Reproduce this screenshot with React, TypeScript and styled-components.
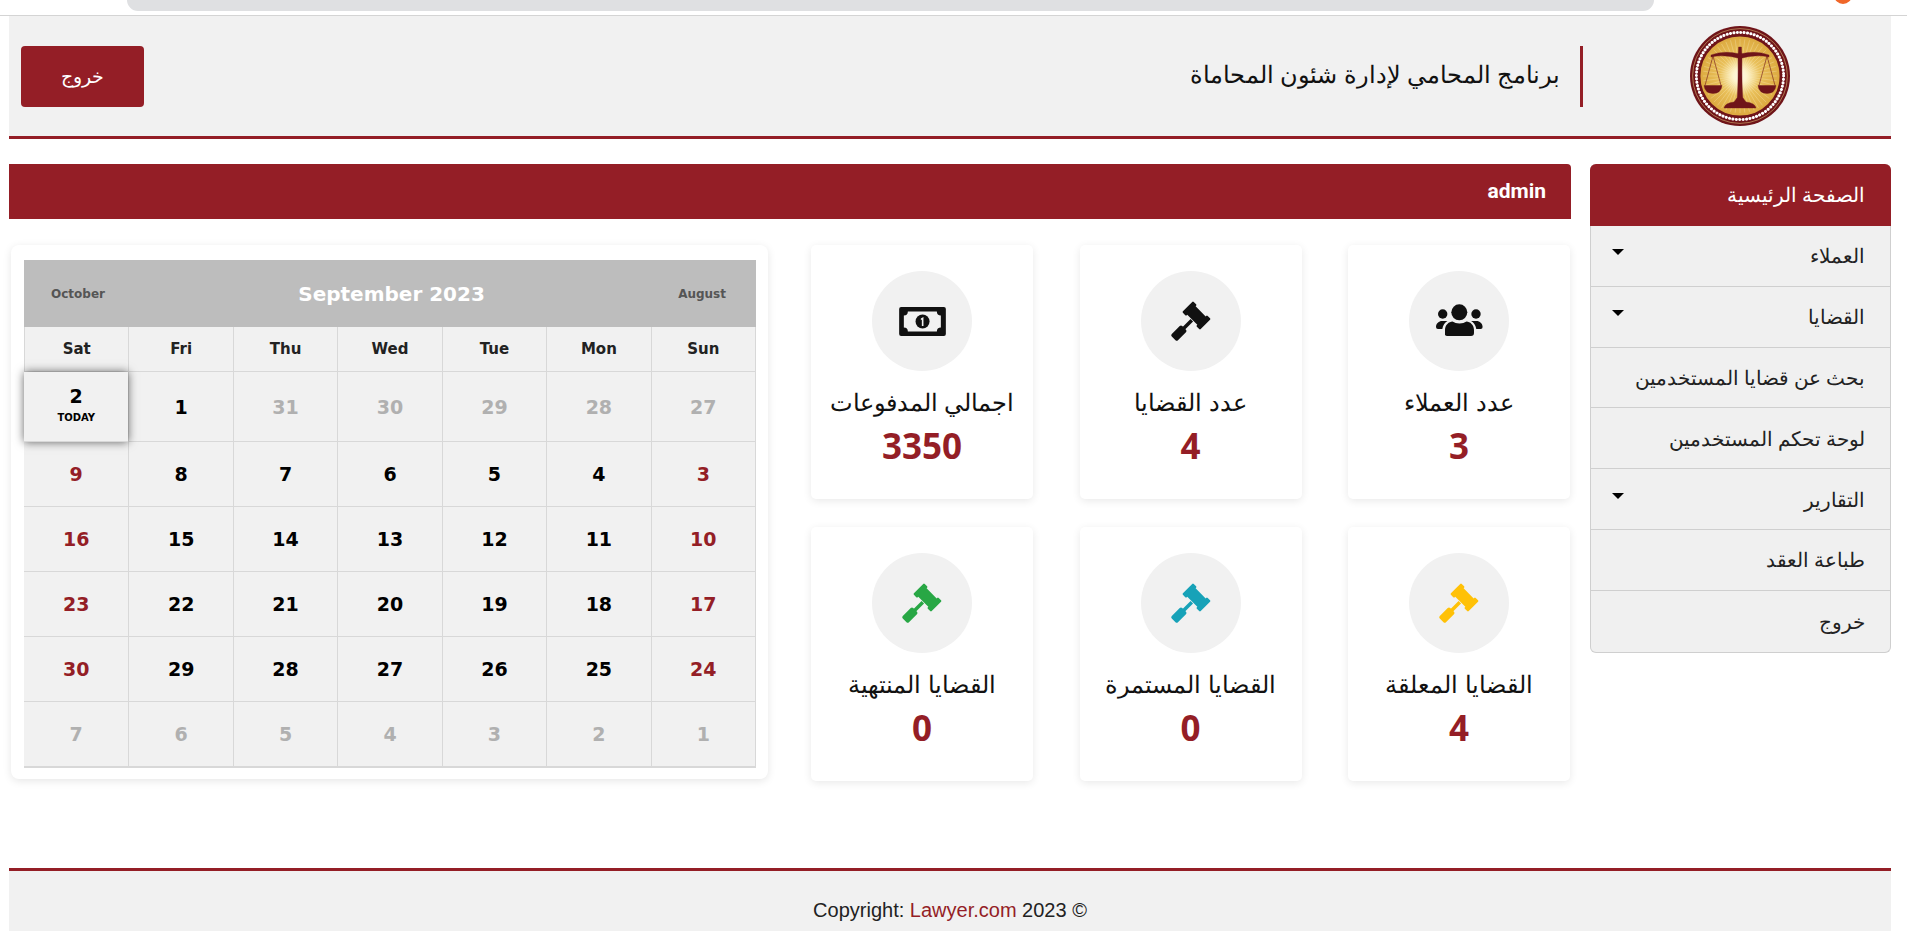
import React from "react";
import styled, { createGlobalStyle } from "styled-components";

const RED = "#941e26";

const GlobalStyle = createGlobalStyle`
  html, body {
    margin: 0;
    padding: 0;
    background: #ffffff;
    overflow: hidden;
  }
  * {
    box-sizing: border-box;
  }
  body {
    font-family: "Open Sans", "Noto Sans", sans-serif;
    color: #111;
  }
`;

const BrowserStrip = styled.div`
  height: 16px;
  border-bottom: 1px solid #d4d4d4;
  padding: 0 253px 0 127px;
  display: flex;
  direction: ltr;
  position: relative;
  overflow: hidden;
`;

const AddressPill = styled.div`
  flex: 1;
  height: 11px;
  background: #dfe0e2;
  border-radius: 0 0 14px 14px;
`;

const OrangeDot = styled.div`
  position: absolute;
  left: 1834px;
  top: -14px;
  width: 18px;
  height: 18px;
  border-radius: 50%;
  background: #f0672a;
`;

const Page = styled.div`
  direction: rtl;
  padding: 0 16px 0 9px;
`;

const Header = styled.header`
  height: 123px;
  background: #f1f1f1;
  border-bottom: 3px solid ${RED};
  display: flex;
  align-items: center;
  padding: 0 101px 0 12px;
`;

const Logo = styled.svg`
  width: 100px;
  height: 100px;
  flex: none;
`;

const BrandTitle = styled.h1`
  margin: 0 107px 0 0;
  height: 61px;
  flex: 1;
  display: flex;
  align-items: center;
  border-right: 3px solid ${RED};
  padding: 0 20px 5px 0;
  font-size: 23.8px;
  font-weight: 400;
  color: #111;
`;

const LogoutButton = styled.button`
  width: 123px;
  height: 61px;
  border: 0;
  border-radius: 4px;
  background: ${RED};
  color: #fff;
  font-family: inherit;
  font-size: 19px;
`;

const Body = styled.div`
  display: flex;
  gap: 19px;
  padding-top: 25px;
`;

const Sidebar = styled.nav`
  width: 301px;
  flex: none;
  align-self: flex-start;
  background: #f0f0f0;
  border: 1px solid #cfcfcf;
  border-top: 0;
  border-radius: 6px;
`;

const SidebarHead = styled.div`
  height: 62px;
  margin: 0 -1px;
  padding: 0 26px 2px;
  background: ${RED};
  color: #fff;
  font-size: 19.6px;
  font-weight: 500;
  display: flex;
  align-items: center;
  border-radius: 6px 6px 0 0;
`;

const SidebarItem = styled.div`
  height: 60.8px;
  padding: 0 25px;
  display: flex;
  align-items: center;
  justify-content: space-between;
  font-size: 19.6px;
  color: #222;
  border-bottom: 1px solid #cfcfcf;

  &:last-child {
    border-bottom: 0;
  }
`;

const Caret = styled.span`
  width: 0;
  height: 0;
  margin: -7px 0 0 -4px;
  border-top: 6px solid #000;
  border-left: 6px solid transparent;
  border-right: 6px solid transparent;
`;

const Content = styled.main`
  flex: 1;
  min-width: 0;
`;

const AdminBar = styled.div`
  height: 55px;
  background: ${RED};
  border-radius: 0 4px 0 0;
  padding: 0 25px 2px;
  display: flex;
  align-items: center;
  color: #fff;
  font-family: Roboto, sans-serif;
  font-weight: 700;
  font-size: 21px;
`;

const Panels = styled.div`
  display: flex;
  justify-content: space-between;
  align-items: flex-start;
  padding: 26px 1px 0 2px;
`;

const StatGrid = styled.div`
  display: grid;
  grid-template-columns: repeat(3, 222px);
  grid-auto-rows: 254px;
  column-gap: 46.5px;
  row-gap: 28px;
`;

const StatCard = styled.div`
  background: #fff;
  border-radius: 5px;
  box-shadow: 0 2px 8px rgba(0, 0, 0, 0.09);
  padding-top: 26px;
  display: flex;
  flex-direction: column;
  align-items: center;
`;

const IconCircle = styled.div`
  width: 100px;
  height: 100px;
  border-radius: 50%;
  background: #f1f1f1;
  display: flex;
  align-items: center;
  justify-content: center;
`;

const StatLabel = styled.div`
  margin-top: 13px;
  font-size: 24px;
  line-height: 36px;
  color: #111;
`;

const StatValue = styled.div`
  font-size: 35px;
  font-weight: 700;
  line-height: 51px;
  color: ${RED};
`;

const CalendarCard = styled.div`
  width: 757px;
  height: 534px;
  padding: 15px 12px 12px 13px;
  background: #fff;
  border-radius: 8px;
  box-shadow: 0 2px 8px rgba(0, 0, 0, 0.1);
`;

const CalendarHead = styled.div`
  height: 67px;
  background: #bdbdbd;
  padding: 0 30px 0 27px;
  display: flex;
  align-items: center;
  justify-content: space-between;
  font-family: "DejaVu Sans", sans-serif;
  font-weight: 700;
`;

const MonthLink = styled.span`
  font-size: 12px;
  color: #555;
`;

const MonthTitle = styled.span`
  font-size: 20px;
  color: #fff;
`;

const CalendarGrid = styled.div`
  display: grid;
  grid-template-columns: repeat(7, 1fr);
  grid-template-rows: 45px 70px 65px 65px 65px 65px 65px;
  background: #f1f1f1;
  border-right: 1px solid #d8d8d8;
  border-bottom: 1px solid #d8d8d8;
  font-family: "DejaVu Sans", sans-serif;
  font-weight: 700;
`;

const WeekDay = styled.div`
  display: flex;
  align-items: center;
  justify-content: center;
  font-size: 15px;
  color: #222;
  border-left: 1px solid #d8d8d8;
  border-bottom: 1px solid #d8d8d8;

  &:last-of-type {
    border-left: 0;
  }
`;

const dayColors = { normal: "#000", weekend: RED, muted: "#b0b0b0" };

const DayCell = styled.div<{ $tone: keyof typeof dayColors; $today?: boolean; $edge?: boolean }>`
  display: flex;
  flex-direction: column;
  align-items: center;
  justify-content: center;
  font-size: 19px;
  color: ${(p) => dayColors[p.$tone]};
  border-left: ${(p) => (p.$edge ? "0" : "1px solid #d8d8d8")};
  border-bottom: 1px solid #d8d8d8;
  ${(p) =>
    p.$today
      ? `
    position: relative;
    background: #f1f1f1;
    box-shadow: 0 0 9px rgba(0, 0, 0, 0.6);
    line-height: 23px;
    padding-bottom: 3px;
  `
      : ""}
`;

const TodayTag = styled.span`
  margin-top: 3px;
  font-size: 10px;
  line-height: 14px;
  color: #000;
`;

const Footer = styled.footer`
  margin-top: 87px;
  height: 90px;
  background: #f1f1f1;
  border-top: 3px solid ${RED};
  padding-top: 26px;
  text-align: center;
  font-family: "Liberation Sans", sans-serif;
  font-size: 20px;
  line-height: 26px;
  color: #222;
`;

const FooterLink = styled.span`
  color: ${RED};
`;

function LawLogo() {
  const rays = Array.from({ length: 48 }, (_, i) => (i * 360) / 48);
  return (
    <Logo viewBox="0 0 100 100" role="img" aria-label="logo">
      <defs>
        <radialGradient id="gold">
          <stop offset="0%" stopColor="#ffffff" />
          <stop offset="18%" stopColor="#fdf3c9" />
          <stop offset="50%" stopColor="#e9c05a" />
          <stop offset="100%" stopColor="#dca93f" />
        </radialGradient>
      </defs>
      <circle cx="50" cy="50" r="50" fill="#6f1419" />
      <circle cx="50" cy="50" r="47.4" fill="none" stroke="#d9b774" strokeWidth="0.6" />
      <circle cx="50" cy="50" r="43.6" fill="none" stroke="#fff" strokeWidth="3" strokeLinecap="round" strokeDasharray="0.1 3.33" />
      <circle cx="50" cy="50" r="40.4" fill="url(#gold)" stroke="#6f1419" strokeWidth="1.6" />
      {rays.map((a) => (
        <line key={a} x1="50" y1="50" x2="50" y2="13" stroke="#fff4cf" strokeWidth="0.5" opacity="0.5" transform={`rotate(${a} 50 50)`} />
      ))}
      <g fill="#6f1419" stroke="#6f1419">
        <path d="M48.6 21 L51.4 21 L52 30 Q51.6 60 53 74 L47 74 Q48.4 60 48 30 Z" strokeWidth="0.4" />
        <path d="M21 29 Q34 24 50 28 Q66 24 79 29 L79 31 Q66 28 50 32.5 Q34 28 21 31 Z" strokeWidth="0.4" />
        <path d="M34 82 Q35 77 44 76 L47 72 L53 72 L56 76 Q65 77 66 82 Z" strokeWidth="0.4" />
        <path d="M14 59.5 L32 59.5 Q31 67.5 23 67.5 Q15 67.5 14 59.5 Z" strokeWidth="0.4" />
        <path d="M68 59.5 L86 59.5 Q85 67.5 77 67.5 Q69 67.5 68 59.5 Z" strokeWidth="0.4" />
        <path d="M23 30 L15 59.5 M23 30 L31 59.5 M77 30 L69 59.5 M77 30 L85 59.5" fill="none" strokeWidth="0.6" />
      </g>
    </Logo>
  );
}

function MoneyIcon() {
  return (
    <svg width="47" height="29" viewBox="13.3 16 46.7 29" aria-hidden="true">
      <rect x="13.3" y="16" width="46.7" height="29" rx="2" fill="#111" />
      <path d="M22 20.5 H51 a4 4 0 0 0 4 4 V36.5 a4 4 0 0 0 -4 4 H22 a4 4 0 0 0 -4 -4 V24.5 a4 4 0 0 0 4 -4 Z" fill="#f1f1f1" />
      <circle cx="36.7" cy="30.5" r="7" fill="#111" />
      <path d="M35 27.5 L37.6 26 V35 H36 V28.6 L35 29.2 Z" fill="#f1f1f1" />
    </svg>
  );
}

function GavelIcon({ color }: { color: string }) {
  return (
    <svg width="46" height="46" viewBox="10 10 42 42" fill={color} aria-hidden="true">
      <g transform="translate(36 26) rotate(45)">
        <path d="M-10.5 -7 h3 a1 1 0 0 1 1 1 v0.6 h13 v-0.6 a1 1 0 0 1 1 -1 h3 a1 1 0 0 1 1 1 v12 a1 1 0 0 1 -1 1 h-3 a1 1 0 0 1 -1 -1 v-0.6 h-13 v0.6 a1 1 0 0 1 -1 1 h-3 a1 1 0 0 1 -1 -1 v-12 a1 1 0 0 1 1 -1 Z" />
        <rect x="-1.6" y="6" width="3.2" height="11" />
        <rect x="-4" y="16" width="8" height="13.5" rx="1.6" />
      </g>
    </svg>
  );
}

function UsersIcon() {
  return (
    <svg width="48" height="36" viewBox="9 13 48 36" fill="#111" aria-hidden="true">
      <circle cx="33.3" cy="22.3" r="8" />
      <circle cx="16.7" cy="24" r="4.7" />
      <circle cx="50" cy="24" r="4.7" />
      <path d="M19 45 v-5 c0 -5 4 -8.5 7.5 -8.5 c2 1.3 4 2 7 2 s5 -.7 7 -2 c3.5 0 7.5 3.5 7.5 8.5 v3 a3 3 0 0 1 -3 3 H22 a3 3 0 0 1 -3 -1 Z" />
      <path d="M10 37 c0 -3.5 3 -6 6 -6 h5.5 c-2.5 1.5 -4.5 4 -5.2 8 h-4.3 a2 2 0 0 1 -2 -2 Z" />
      <path d="M56.6 37 c0 -3.5 -3 -6 -6 -6 h-5.5 c2.5 1.5 4.5 4 5.2 8 h4.3 a2 2 0 0 0 2 -2 Z" />
    </svg>
  );
}

const MENU = [
  { label: "العملاء", caret: true },
  { label: "القضايا", caret: true },
  { label: "بحث عن قضايا المستخدمين" },
  { label: "لوحة تحكم المستخدمين" },
  { label: "التقارير", caret: true },
  { label: "طباعة العقد" },
  { label: "خروج" },
];

const STATS = [
  { label: "عدد العملاء", value: "3", icon: <UsersIcon /> },
  { label: "عدد القضايا", value: "4", icon: <GavelIcon color="#111" /> },
  { label: "اجمالي المدفوعات", value: "3350", icon: <MoneyIcon /> },
  { label: "القضايا المعلقة", value: "4", icon: <GavelIcon color="#ffc107" /> },
  { label: "القضايا المستمرة", value: "0", icon: <GavelIcon color="#17a2b8" /> },
  { label: "القضايا المنتهية", value: "0", icon: <GavelIcon color="#28a745" /> },
];

const WEEK_DAYS = ["Sun", "Mon", "Tue", "Wed", "Thu", "Fri", "Sat"];

// rows read from the right (Sunday first), the page runs rtl
const WEEKS = [
  [27, 28, 29, 30, 31, 1, 2],
  [3, 4, 5, 6, 7, 8, 9],
  [10, 11, 12, 13, 14, 15, 16],
  [17, 18, 19, 20, 21, 22, 23],
  [24, 25, 26, 27, 28, 29, 30],
  [1, 2, 3, 4, 5, 6, 7],
];

function toneOf(week: number, col: number, day: number) {
  if (week === 5 || (week === 0 && day > 20)) return "muted" as const;
  if (col === 0 || col === 6) return week === 0 ? ("normal" as const) : ("weekend" as const);
  return "normal" as const;
}

export default function App() {
  return (
    <>
      <GlobalStyle />
      <BrowserStrip>
        <AddressPill />
        <OrangeDot />
      </BrowserStrip>
      <Page>
        <Header>
          <LawLogo />
          <BrandTitle>برنامج المحامي لإدارة شئون المحاماة</BrandTitle>
          <LogoutButton>خروج</LogoutButton>
        </Header>
        <Body>
          <Sidebar>
            <SidebarHead>الصفحة الرئيسية</SidebarHead>
            {MENU.map((item) => (
              <SidebarItem key={item.label}>
                {item.label}
                {item.caret && <Caret />}
              </SidebarItem>
            ))}
          </Sidebar>
          <Content>
            <AdminBar>admin</AdminBar>
            <Panels>
              <StatGrid>
                {STATS.map((stat) => (
                  <StatCard key={stat.label}>
                    <IconCircle>{stat.icon}</IconCircle>
                    <StatLabel>{stat.label}</StatLabel>
                    <StatValue>{stat.value}</StatValue>
                  </StatCard>
                ))}
              </StatGrid>
              <CalendarCard>
                <CalendarHead>
                  <MonthLink>August</MonthLink>
                  <MonthTitle>September 2023</MonthTitle>
                  <MonthLink>October</MonthLink>
                </CalendarHead>
                <CalendarGrid>
                  {WEEK_DAYS.map((d) => (
                    <WeekDay key={d}>{d}</WeekDay>
                  ))}
                  {WEEKS.map((week, w) =>
                    week.map((day, c) => (
                      <DayCell key={`${w}-${c}`} $tone={toneOf(w, c, day)} $today={w === 0 && c === 6} $edge={c === 6}>
                        {day}
                        {w === 0 && c === 6 && <TodayTag>TODAY</TodayTag>}
                      </DayCell>
                    ))
                  )}
                </CalendarGrid>
              </CalendarCard>
            </Panels>
          </Content>
        </Body>
        <Footer>
          <span dir="ltr">
            Copyright: <FooterLink>Lawyer.com</FooterLink> 2023 ©
          </span>
        </Footer>
      </Page>
    </>
  );
}
